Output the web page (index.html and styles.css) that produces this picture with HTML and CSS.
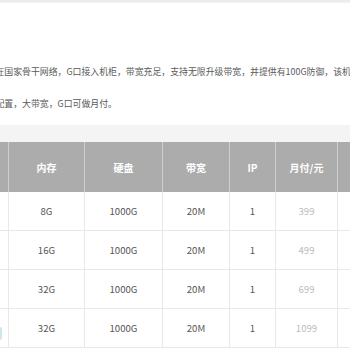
FILE: index.html
```html
<!DOCTYPE html>
<html lang="zh-CN">
<head>
<meta charset="utf-8">
<title>服务器配置</title>
<link rel="stylesheet" href="styles.css">
</head>
<body>
<div class="page">
  <div class="topbar"></div>
  <div class="intro">
    <p class="line">在国家骨干网络，G口接入机柜，带宽充足，支持无限升级带宽，并提供有100G防御，该机</p>
    <p class="line">配置，大带宽，G口可做月付。</p>
  </div>
  <div class="band"></div>
  <table class="prices">
    <colgroup>
      <col class="c0"><col class="c1"><col class="c2"><col class="c3"><col class="c4"><col class="c5"><col class="c6">
    </colgroup>
    <thead>
      <tr><th></th><th>内存</th><th>硬盘</th><th>带宽</th><th>IP</th><th>月付/元</th><th></th></tr>
    </thead>
    <tbody>
      <tr><td></td><td>8G</td><td>1000G</td><td>20M</td><td>1</td><td class="price">399</td><td></td></tr>
      <tr><td></td><td>16G</td><td>1000G</td><td>20M</td><td>1</td><td class="price">499</td><td></td></tr>
      <tr><td></td><td>32G</td><td>1000G</td><td>20M</td><td>1</td><td class="price">699</td><td></td></tr>
      <tr><td class="first"><span class="tag"></span></td><td>32G</td><td>1000G</td><td>20M</td><td>1</td><td class="price">1099</td><td></td></tr>
    </tbody>
  </table>
</div>
</body>
</html>
```
FILE: styles.css
```css
html, body {
  margin: 0;
  padding: 0;
  background: #fff;
}
body {
  width: 350px;
  height: 350px;
  overflow: hidden;
  font-family: "Noto Sans CJK SC", "Noto Sans", sans-serif;
}
.page {
  width: 350px;
  overflow: hidden;
}
.topbar {
  height: 2px;
  background: #ececec;
  box-shadow: 0 1px 1px #f3f3f3;
}
.intro {
  padding-top: 62px;
  margin-left: -4.5px;
}
.line {
  margin: 0 0 16px;
  font-size: 8.9px;
  line-height: 16px;
  color: #5a5a5a;
  white-space: nowrap;
}
.band {
  margin-top: -3px;
  height: 17px;
  background: #f4f4f4;
}
.prices {
  margin-left: -62px;
  width: 479px;
  table-layout: fixed;
  border-collapse: collapse;
}
.c0 { width: 70px; }
.c1 { width: 76px; }
.c2 { width: 78px; }
.c3 { width: 67px; }
.c4 { width: 46px; }
.c5 { width: 62px; }
.c6 { width: 80px; }
.prices th {
  height: 50px;
  padding: 0;
  background: #acacac;
  color: #fff;
  font-size: 10px;
  font-weight: bold;
  text-align: center;
  border-left: 1px solid #cfcfcf;
  border-right: 1px solid #cfcfcf;
}
.prices td {
  height: 38px;
  padding: 0;
  text-align: center;
  font-size: 9.6px;
  color: #555;
  border: 1px solid #e8e8e8;
  border-top: 0;
}
.prices td.price {
  color: #bbb;
}
.prices td.first {
  text-align: right;
  padding-right: 6px;
}
.tag {
  display: inline-block;
  width: 20px;
  height: 13px;
  margin-top: 10px;
  background: #cfe6ea;
  border-radius: 2px;
  vertical-align: top;
}
```
